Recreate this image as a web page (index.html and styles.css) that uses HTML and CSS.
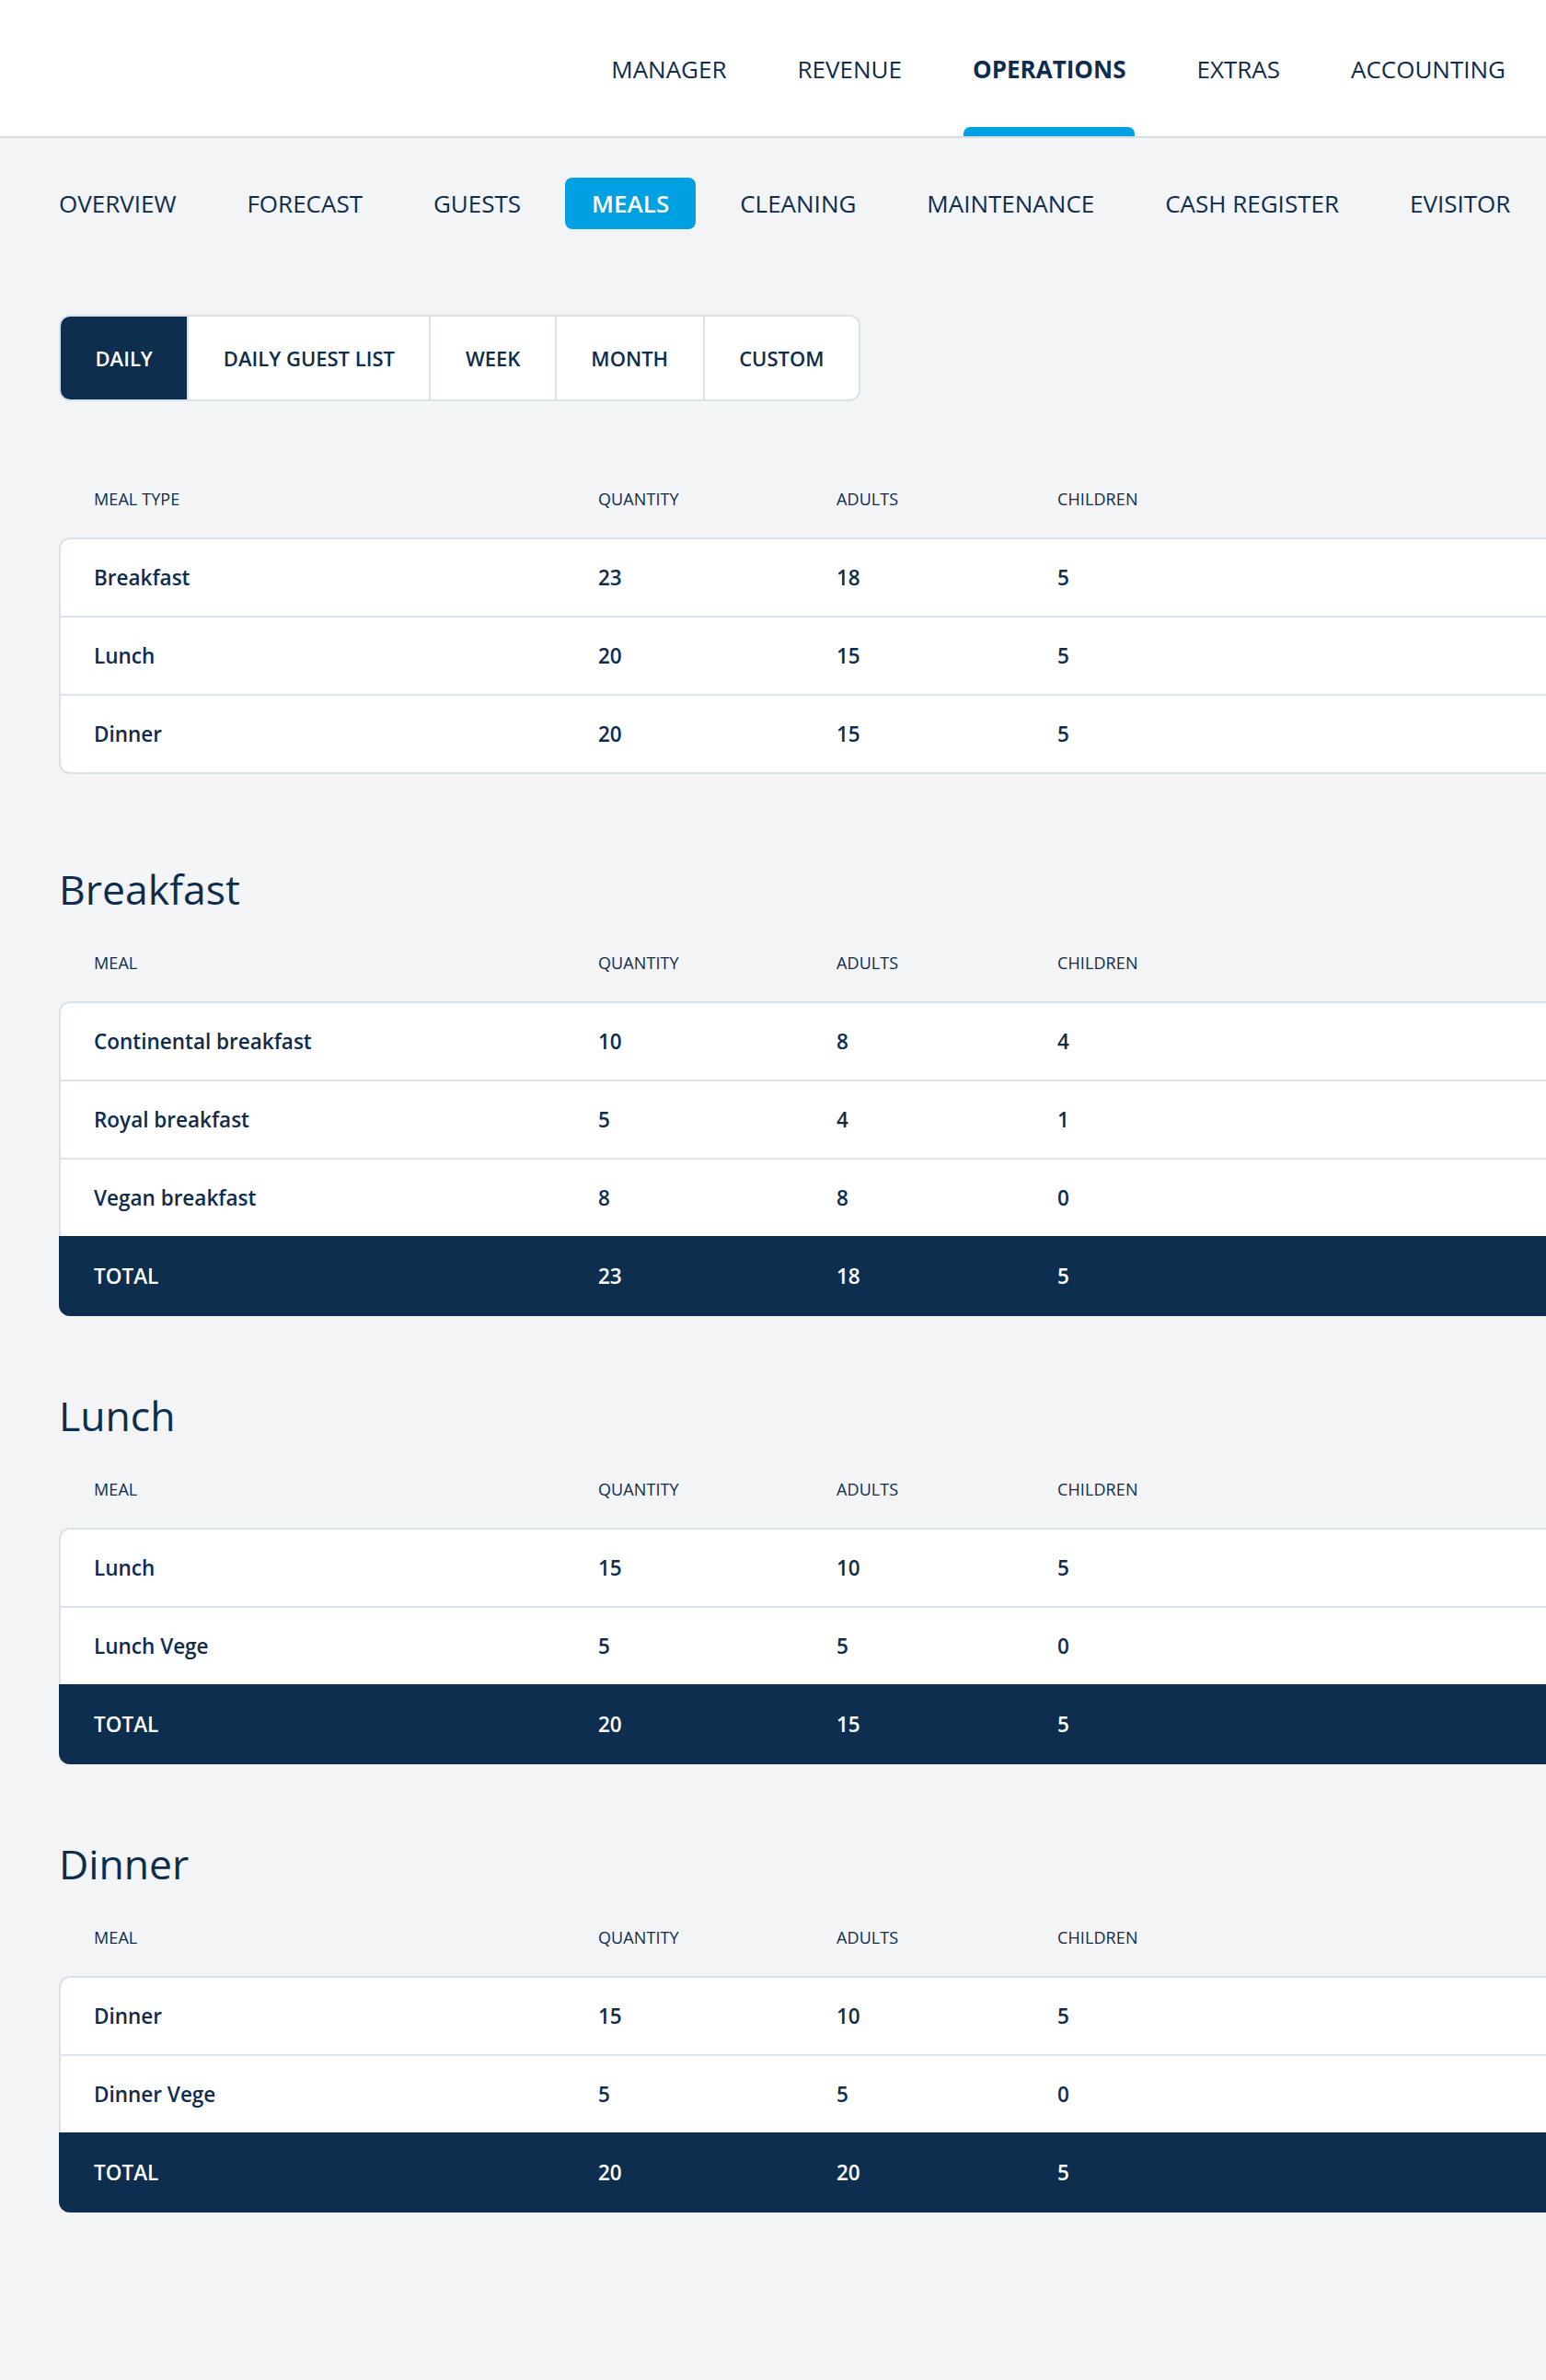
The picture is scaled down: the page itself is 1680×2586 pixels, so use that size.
FILE: index.html
```html
<!DOCTYPE html>
<html lang="en">
<head>
<meta charset="utf-8">
<title>Operations – Meals</title>
<link rel="stylesheet" href="styles.css">
</head>
<body>
<div class="page">
  <header class="topbar">
    <nav class="mainnav">
      <a class="mainnav-item">MANAGER</a>
      <a class="mainnav-item">REVENUE</a>
      <a class="mainnav-item is-active">OPERATIONS</a>
      <a class="mainnav-item">EXTRAS</a>
      <a class="mainnav-item">ACCOUNTING</a>
    </nav>
  </header>

  <main class="content">
    <nav class="subnav">
      <a class="subnav-item">OVERVIEW</a>
      <a class="subnav-item">FORECAST</a>
      <a class="subnav-item">GUESTS</a>
      <a class="subnav-item is-active">MEALS</a>
      <a class="subnav-item">CLEANING</a>
      <a class="subnav-item">MAINTENANCE</a>
      <a class="subnav-item">CASH REGISTER</a>
      <a class="subnav-item">EVISITOR</a>
    </nav>

    <div class="segmented">
      <button class="segment is-active">DAILY</button>
      <button class="segment">DAILY GUEST LIST</button>
      <button class="segment">WEEK</button>
      <button class="segment">MONTH</button>
      <button class="segment">CUSTOM</button>
    </div>

    <section class="table-block summary">
      <div class="thead">
        <span>MEAL TYPE</span><span>QUANTITY</span><span>ADULTS</span><span>CHILDREN</span>
      </div>
      <div class="card">
        <div class="row"><span>Breakfast</span><span>23</span><span>18</span><span>5</span></div>
        <div class="row"><span>Lunch</span><span>20</span><span>15</span><span>5</span></div>
        <div class="row"><span>Dinner</span><span>20</span><span>15</span><span>5</span></div>
      </div>
    </section>

    <section class="table-block meal-section">
      <h2 class="section-title">Breakfast</h2>
      <div class="thead">
        <span>MEAL</span><span>QUANTITY</span><span>ADULTS</span><span>CHILDREN</span>
      </div>
      <div class="card">
        <div class="row"><span>Continental breakfast</span><span>10</span><span>8</span><span>4</span></div>
        <div class="row"><span>Royal breakfast</span><span>5</span><span>4</span><span>1</span></div>
        <div class="row"><span>Vegan breakfast</span><span>8</span><span>8</span><span>0</span></div>
        <div class="row total"><span>TOTAL</span><span>23</span><span>18</span><span>5</span></div>
      </div>
    </section>

    <section class="table-block meal-section">
      <h2 class="section-title">Lunch</h2>
      <div class="thead">
        <span>MEAL</span><span>QUANTITY</span><span>ADULTS</span><span>CHILDREN</span>
      </div>
      <div class="card">
        <div class="row"><span>Lunch</span><span>15</span><span>10</span><span>5</span></div>
        <div class="row"><span>Lunch Vege</span><span>5</span><span>5</span><span>0</span></div>
        <div class="row total"><span>TOTAL</span><span>20</span><span>15</span><span>5</span></div>
      </div>
    </section>

    <section class="table-block meal-section">
      <h2 class="section-title">Dinner</h2>
      <div class="thead">
        <span>MEAL</span><span>QUANTITY</span><span>ADULTS</span><span>CHILDREN</span>
      </div>
      <div class="card">
        <div class="row"><span>Dinner</span><span>15</span><span>10</span><span>5</span></div>
        <div class="row"><span>Dinner Vege</span><span>5</span><span>5</span><span>0</span></div>
        <div class="row total"><span>TOTAL</span><span>20</span><span>20</span><span>5</span></div>
      </div>
    </section>
  </main>
</div>
</body>
</html>
```

FILE: styles.css
```css
* { box-sizing: border-box; }

html, body {
  margin: 0;
  padding: 0;
}

body {
  background: #f3f4f6;
  font-family: "Open Sans", "Noto Sans", "Liberation Sans", sans-serif;
  color: #0d2c4e;
}

.page {
  width: 1680px;
  min-height: 2586px;
  overflow: hidden;
  background: #f3f4f6;
}

/* ---------- top bar ---------- */
.topbar {
  height: 150px;
  background: #ffffff;
  border-bottom: 2px solid #d6dfe8;
  display: flex;
  justify-content: flex-end;
  padding-right: 44px;
}

.mainnav {
  display: flex;
  gap: 77px;
  height: 148px;
}

.mainnav-item {
  position: relative;
  display: flex;
  align-items: center;
  padding-top: 2px;
  font-size: 26px;
  font-weight: 400;
  color: #0d2c4e;
  white-space: nowrap;
  cursor: pointer;
}

.mainnav-item.is-active {
  font-weight: 700;
}

.mainnav-item.is-active::after {
  content: "";
  position: absolute;
  left: -10px;
  right: -10px;
  bottom: 0;
  height: 10px;
  background: #00a1e2;
  border-radius: 7px 7px 0 0;
}

/* ---------- content ---------- */
.content {
  padding: 43px 0 120px 64px;
  border-left: 2px solid #e7ebef;
  margin-left: -2px;
}

.subnav {
  display: flex;
  gap: 77px;
  height: 56px;
  align-items: center;
}

.subnav-item {
  font-size: 26px;
  line-height: 56px;
  color: #0d2c4e;
  white-space: nowrap;
  cursor: pointer;
}

.subnav-item.is-active {
  background: #00a1e2;
  color: #ffffff;
  font-weight: 600;
  padding: 0 29px;
  margin: 0 -29px;
  border-radius: 8px;
}

/* ---------- segmented control ---------- */
.segmented {
  display: inline-flex;
  margin-top: 93px;
  height: 94px;
  border: 2px solid #d9e1e9;
  border-radius: 12px;
  overflow: hidden;
  background: #ffffff;
}

.segment {
  font-family: inherit;
  font-size: 22px;
  font-weight: 600;
  color: #0d2c4e;
  background: #ffffff;
  border: 0;
  border-left: 2px solid #d9e1e9;
  padding: 0 37.5px;
  margin: 0;
  cursor: pointer;
  white-space: nowrap;
}

.segment:first-child {
  border-left: 0;
}

.segment.is-active {
  background: #0e2e4f;
  color: #ffffff;
}

/* ---------- tables ---------- */
.table-block {
  display: block;
}

.summary {
  margin-top: 64px;
  margin-bottom: 95px;
}

.meal-section + .meal-section {
  margin-top: 78px;
}

.section-title {
  margin: 0 0 8px;
  font-size: 44.5px;
  line-height: 60px;
  font-weight: 400;
  color: #0d2c4e;
}

.thead,
.row {
  display: grid;
  grid-template-columns: 548px 259px 240px 1fr;
  align-items: center;
}

.thead {
  height: 84px;
  padding-left: 38px;
  font-size: 18px;
  font-weight: 400;
  color: #0d2c4e;
  letter-spacing: 0.1px;
}

.card {
  width: calc(100% + 40px);
  background: #ffffff;
  border: 2px solid #d9e1e9;
  border-right: 0;
  border-radius: 12px 0 0 12px;
}

.row {
  height: 85px;
  padding-left: 36px;
  border-top: 2px solid #dde4eb;
  font-size: 22.5px;
  font-weight: 600;
  color: #0d2c4e;
}

.row:first-child {
  height: 83px;
  border-top: 0;
}

.row.total {
  height: 87px;
  margin: 0 0 -2px -2px;
  padding-left: 38px;
  border-top: 0;
  background: #0e2e4f;
  color: #ffffff;
  border-radius: 0 0 0 12px;
}
```
